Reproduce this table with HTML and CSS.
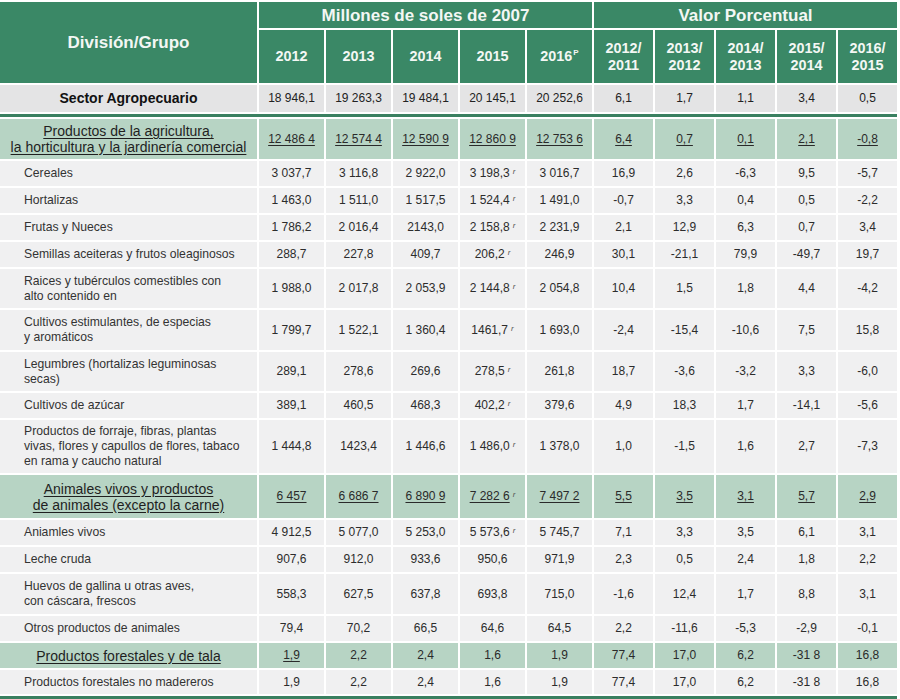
FILE: index.html
```html
<!DOCTYPE html>
<html lang="es">
<head>
<meta charset="utf-8">
<title>Producción agropecuaria</title>
<link rel="stylesheet" href="styles.css">
</head>
<body>
<table class="tbl">
  <colgroup>
    <col class="c-label">
    <col class="c-val"><col class="c-val"><col class="c-val"><col class="c-val"><col class="c-val">
    <col class="c-pct"><col class="c-pct"><col class="c-pct"><col class="c-pct"><col class="c-pct">
  </colgroup>
  <thead>
    <tr class="h1">
      <th rowspan="2" class="hd-big">División/Grupo</th>
      <th colspan="5" class="hd-big">Millones de soles de 2007</th>
      <th colspan="5" class="hd-big">Valor Porcentual</th>
    </tr>
    <tr class="h2">
      <th>2012</th><th>2013</th><th>2014</th><th>2015</th><th>2016<sup class="p">P</sup></th>
      <th>2012/<br>2011</th><th>2013/<br>2012</th><th>2014/<br>2013</th><th>2015/<br>2014</th><th>2016/<br>2015</th>
    </tr>
  </thead>
  <tbody>
    <tr class="sector">
      <td class="lbl-sector">Sector Agropecuario</td>
      <td>18 946,1</td><td>19 263,3</td><td>19 484,1</td><td>20 145,1</td><td>20 252,6</td>
      <td>6,1</td><td>1,7</td><td>1,1</td><td>3,4</td><td>0,5</td>
    </tr>
    <tr class="rule"><td colspan="11"></td></tr>
    <tr class="section s1">
      <td class="lbl-section"><u>Productos de la agricultura,<br>la horticultura y la jardinería comercial</u></td>
      <td><u>12 486 4</u></td><td><u>12 574 4</u></td><td><u>12 590 9</u></td><td><u>12 860 9</u></td><td><u>12 753 6</u></td>
      <td><u>6,4</u></td><td><u>0,7</u></td><td><u>0,1</u></td><td><u>2,1</u></td><td><u>-0,8</u></td>
    </tr>
    <tr class="row">
      <td class="lbl">Cereales</td>
      <td>3 037,7</td><td>3 116,8</td><td>2 922,0</td><td>3 198,3<sup class="r">r</sup></td><td>3 016,7</td>
      <td>16,9</td><td>2,6</td><td>-6,3</td><td>9,5</td><td>-5,7</td>
    </tr>
    <tr class="row">
      <td class="lbl">Hortalizas</td>
      <td>1 463,0</td><td>1 511,0</td><td>1 517,5</td><td>1 524,4<sup class="r">r</sup></td><td>1 491,0</td>
      <td>-0,7</td><td>3,3</td><td>0,4</td><td>0,5</td><td>-2,2</td>
    </tr>
    <tr class="row">
      <td class="lbl">Frutas y Nueces</td>
      <td>1 786,2</td><td>2 016,4</td><td>2143,0</td><td>2 158,8<sup class="r">r</sup></td><td>2 231,9</td>
      <td>2,1</td><td>12,9</td><td>6,3</td><td>0,7</td><td>3,4</td>
    </tr>
    <tr class="row">
      <td class="lbl">Semillas aceiteras y frutos oleaginosos</td>
      <td>288,7</td><td>227,8</td><td>409,7</td><td>206,2<sup class="r">r</sup></td><td>246,9</td>
      <td>30,1</td><td>-21,1</td><td>79,9</td><td>-49,7</td><td>19,7</td>
    </tr>
    <tr class="row row2">
      <td class="lbl">Raices y tubérculos comestibles con<br>alto contenido en</td>
      <td>1 988,0</td><td>2 017,8</td><td>2 053,9</td><td>2 144,8<sup class="r">r</sup></td><td>2 054,8</td>
      <td>10,4</td><td>1,5</td><td>1,8</td><td>4,4</td><td>-4,2</td>
    </tr>
    <tr class="row row2 tall">
      <td class="lbl">Cultivos estimulantes, de especias<br>y aromáticos</td>
      <td>1 799,7</td><td>1 522,1</td><td>1 360,4</td><td>1461,7<sup class="r">r</sup></td><td>1 693,0</td>
      <td>-2,4</td><td>-15,4</td><td>-10,6</td><td>7,5</td><td>15,8</td>
    </tr>
    <tr class="row row2">
      <td class="lbl">Legumbres (hortalizas leguminosas<br>secas)</td>
      <td>289,1</td><td>278,6</td><td>269,6</td><td>278,5<sup class="r">r</sup></td><td>261,8</td>
      <td>18,7</td><td>-3,6</td><td>-3,2</td><td>3,3</td><td>-6,0</td>
    </tr>
    <tr class="row">
      <td class="lbl">Cultivos de azúcar</td>
      <td>389,1</td><td>460,5</td><td>468,3</td><td>402,2<sup class="r">r</sup></td><td>379,6</td>
      <td>4,9</td><td>18,3</td><td>1,7</td><td>-14,1</td><td>-5,6</td>
    </tr>
    <tr class="row row3">
      <td class="lbl">Productos de forraje, fibras, plantas<br>vivas, flores y capullos de flores, tabaco<br>en rama y caucho natural</td>
      <td>1 444,8</td><td>1423,4</td><td>1 446,6</td><td>1 486,0<sup class="r">r</sup></td><td>1 378,0</td>
      <td>1,0</td><td>-1,5</td><td>1,6</td><td>2,7</td><td>-7,3</td>
    </tr>
    <tr class="section s2">
      <td class="lbl-section"><u>Animales vivos y productos<br>de animales (excepto la carne)</u></td>
      <td><u>6 457</u></td><td><u>6 686 7</u></td><td><u>6 890 9</u></td><td><u>7 282 6</u><sup class="r">r</sup></td><td><u>7 497 2</u></td>
      <td><u>5,5</u></td><td><u>3,5</u></td><td><u>3,1</u></td><td><u>5,7</u></td><td><u>2,9</u></td>
    </tr>
    <tr class="row">
      <td class="lbl">Aniamles vivos</td>
      <td>4 912,5</td><td>5 077,0</td><td>5 253,0</td><td>5 573,6<sup class="r">r</sup></td><td>5 745,7</td>
      <td>7,1</td><td>3,3</td><td>3,5</td><td>6,1</td><td>3,1</td>
    </tr>
    <tr class="row">
      <td class="lbl">Leche cruda</td>
      <td>907,6</td><td>912,0</td><td>933,6</td><td>950,6</td><td>971,9</td>
      <td>2,3</td><td>0,5</td><td>2,4</td><td>1,8</td><td>2,2</td>
    </tr>
    <tr class="row row2 tall">
      <td class="lbl">Huevos de gallina u otras aves,<br>con cáscara, frescos</td>
      <td>558,3</td><td>627,5</td><td>637,8</td><td>693,8</td><td>715,0</td>
      <td>-1,6</td><td>12,4</td><td>1,7</td><td>8,8</td><td>3,1</td>
    </tr>
    <tr class="row">
      <td class="lbl">Otros productos de animales</td>
      <td>79,4</td><td>70,2</td><td>66,5</td><td>64,6</td><td>64,5</td>
      <td>2,2</td><td>-11,6</td><td>-5,3</td><td>-2,9</td><td>-0,1</td>
    </tr>
    <tr class="section s3">
      <td class="lbl-section"><u>Productos forestales y de tala</u></td>
      <td><u>1,9</u></td><td>2,2</td><td>2,4</td><td>1,6</td><td>1,9</td>
      <td>77,4</td><td>17,0</td><td>6,2</td><td>-31 8</td><td>16,8</td>
    </tr>
    <tr class="row last">
      <td class="lbl">Productos forestales no madereros</td>
      <td>1,9</td><td>2,2</td><td>2,4</td><td>1,6</td><td>1,9</td>
      <td>77,4</td><td>17,0</td><td>6,2</td><td>-31 8</td><td>16,8</td>
    </tr>
    <tr class="rule"><td colspan="11"></td></tr>
  </tbody>
</table>
</body>
</html>
```
FILE: styles.css
```css
html, body {
  margin: 0;
  padding: 0;
  background: #ffffff;
}

body {
  font-family: "Liberation Sans", Arial, Helvetica, sans-serif;
  color: #2e2e2e;
}

.tbl {
  border-collapse: separate;
  border-spacing: 2px;
  table-layout: fixed;
  width: 901px;
  margin: 0 0 0 -2px;
}

.c-label { width: 257px; }
.c-val { width: 65px; }
.c-pct { width: 59px; }

.tbl th,
.tbl td {
  padding: 0;
  text-align: center;
  vertical-align: middle;
}

/* header */
.tbl th {
  background: #3a8866;
  color: #f3f7f4;
  font-weight: bold;
  font-size: 14.4px;
  line-height: 17px;
}

.tbl .h1 th { height: 26px; }
.tbl .h2 th { height: 53px; }

.tbl th.hd-big {
  font-size: 17px;
}

.p {
  font-size: 8px;
  line-height: 0;
  vertical-align: 6px;
  margin-left: 1px;
}

/* body rows */
.tbl td {
  background: #f0f0f1;
  font-size: 12px;
  line-height: 15px;
  color: #2c2c2c;
}

.tbl .sector td {
  background: #e4e4e5;
  height: 27px;
  color: #222;
}

.tbl td.lbl-sector {
  font-weight: bold;
  font-size: 14px;
  color: #111;
}

.tbl .rule td {
  background: #3a8060;
  height: 3px;
  line-height: 0;
  font-size: 0;
}

.tbl .section td {
  background: #b7d4c4;
  color: #2a2a2a;
}

.tbl .s1 td { height: 40px; }
.tbl .s2 td { height: 43px; }
.tbl .s3 td { height: 25px; }

.tbl td.lbl-section {
  font-size: 14px;
  line-height: 16px;
  color: #1f1f1f;
}

.section u {
  text-underline-offset: 2px;
}

.tbl .row td { height: 25px; }
.tbl .row2 td { height: 39px; }
.tbl .row2.tall td { height: 40px; }
.tbl .row3 td { height: 53px; }
.tbl .row.last td { height: 24px; }

.tbl td.lbl {
  text-align: left;
  padding-left: 24px;
  font-size: 12.2px;
  color: #333;
}

.r {
  font-size: 8px;
  font-style: italic;
  line-height: 0;
  vertical-align: 3px;
  margin-left: 3px;
  color: #555;
}
```
